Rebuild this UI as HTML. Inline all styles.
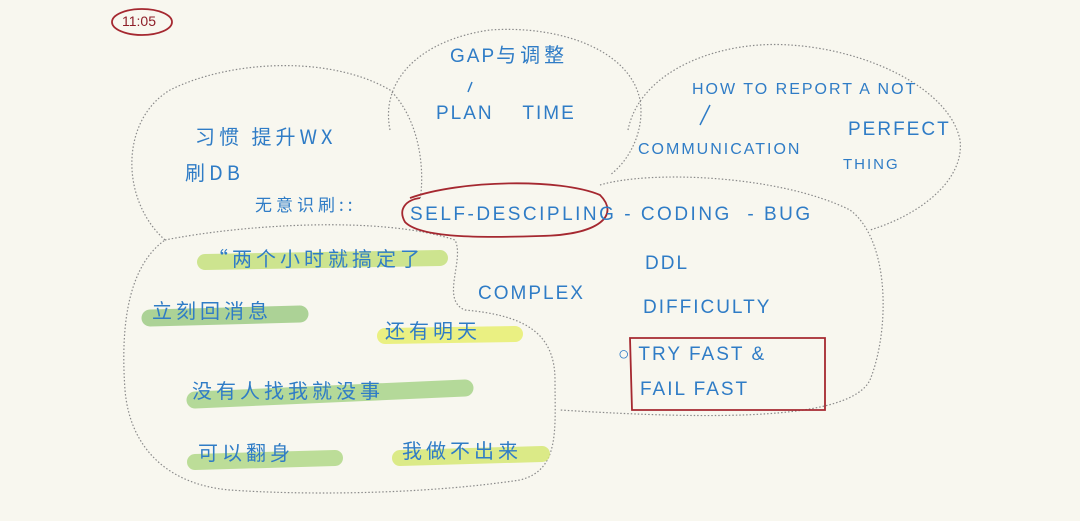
<!DOCTYPE html>
<html><head><meta charset="utf-8"><style>
body{margin:0;width:1080px;height:521px;background:#f8f7ef;overflow:hidden;position:relative;font-family:"Liberation Sans","Noto Sans CJK SC",sans-serif}
svg{position:absolute;left:0;top:0}
.t{position:absolute;color:#2f7cc6;white-space:nowrap;font-size:19px;letter-spacing:2px;line-height:1}
.c{font-family:"Noto Sans CJK SC",sans-serif;font-weight:400;font-size:20px;letter-spacing:4px}
</style></head><body>
<svg width="1080" height="521">
<g fill="none" stroke="#8a8a8a" stroke-width="1.2" stroke-dasharray="1.5 2">
<path d="M165 240 C120 200 120 120 170 90 C230 60 330 55 390 90 C420 120 425 170 420 200"/>
<path d="M390 130 C380 80 420 40 490 30 C560 25 630 50 640 100 C645 130 630 160 610 175"/>
<path d="M628 130 C640 70 720 40 790 45 C870 50 950 90 960 140 C965 180 920 215 870 230"/>
<path d="M600 185 C650 170 780 175 850 210 C890 240 890 330 870 380 C850 420 720 420 560 410"/>
<path d="M165 240 C240 225 380 215 455 240 C465 260 440 300 465 310 C520 315 555 330 555 380 C555 430 560 470 520 480 C420 495 300 495 230 490 C170 485 130 450 125 390 C120 320 130 265 165 240"/>
</g>
<g stroke-linecap="round" fill="none">
<path d="M205 262 L440 258" stroke="#c6e07e" stroke-width="16" opacity=".85"/>
<path d="M150 318 L300 314" stroke="#9fcb86" stroke-width="17" opacity=".85"/>
<path d="M385 336 L515 334" stroke="#e8ef6e" stroke-width="16" opacity=".85"/>
<path d="M195 400 L465 388" stroke="#a8d38a" stroke-width="17" opacity=".85"/>
<path d="M195 462 L335 458" stroke="#b2d888" stroke-width="16" opacity=".85"/>
<path d="M400 458 L542 454" stroke="#d6e874" stroke-width="16" opacity=".85"/>
</g>
<g fill="none" stroke="#a52830" stroke-width="1.8">
<ellipse cx="142" cy="22" rx="30" ry="13"/>
<path d="M410 198 C460 180 560 178 600 195 C620 215 600 235 540 236 C480 238 420 238 405 222 C398 210 405 200 420 198"/>
<path d="M630 338 L825 338 L825 410 L632 410 Z"/>
</g>
<path d="M472 82 L468 92 M710 105 L700 125" stroke="#2f7cc6" stroke-width="1.5"/>
</svg>
<div class="t" style="left:122px;top:14px;color:#8e1e28;font-size:14px;letter-spacing:0">11:05</div>
<div class="t" style="left:450px;top:44px">GAP<span class="c">与调整</span></div>
<div class="t" style="left:436px;top:104px">PLAN &nbsp;&nbsp; TIME</div>
<div class="t" style="left:692px;top:82px;font-size:16px">HOW TO REPORT A NOT</div>
<div class="t" style="left:848px;top:120px">PERFECT</div>
<div class="t" style="left:843px;top:157px;font-size:15px">THING</div>
<div class="t" style="left:638px;top:142px;font-size:16px">COMMUNICATION</div>
<div class="t c" style="left:195px;top:126px">习惯 提升WX</div>
<div class="t c" style="left:185px;top:162px">刷DB</div>
<div class="t c" style="left:255px;top:195px;font-size:17px">无意识刷::</div>
<div class="t" style="left:410px;top:205px;letter-spacing:2.5px">SELF-DESCIPLING - CODING &nbsp;- BUG</div>
<div class="t" style="left:645px;top:254px">DDL</div>
<div class="t" style="left:478px;top:284px">COMPLEX</div>
<div class="t" style="left:643px;top:298px">DIFFICULTY</div>
<div class="t" style="left:618px;top:345px">○ TRY FAST &amp;</div>
<div class="t" style="left:640px;top:380px">FAIL FAST</div>
<div class="t c" style="left:208px;top:248px">“两个小时就搞定了</div>
<div class="t c" style="left:152px;top:300px">立刻回消息</div>
<div class="t c" style="left:385px;top:320px">还有明天</div>
<div class="t c" style="left:192px;top:380px">没有人找我就没事</div>
<div class="t c" style="left:198px;top:442px">可以翻身</div>
<div class="t c" style="left:402px;top:440px">我做不出来</div>
</body></html>
